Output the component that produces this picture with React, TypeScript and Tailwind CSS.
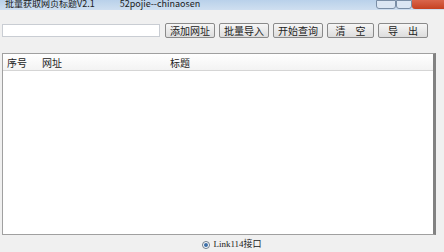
export default function App() {
  const buttons = ['添加网址', '批量导入', '开始查询', '清　空', '导　出']

  return (
    <div
      className="w-[444px] h-[252px] overflow-hidden bg-[#f0f0f0] relative text-[11px] text-[#222]"
      style={{ fontFamily: '"Noto Sans CJK SC", "Liberation Sans", sans-serif' }}
    >
      {/* title bar */}
      <div className="h-[10px] bg-gradient-to-b from-[#b9d1ea] to-[#cfdff0] flex items-end relative">
        <div className="mb-[1px] pl-[5px] flex gap-[25px] text-[9px] leading-[10px] text-[#1a1a1a]">
          <span>批量获取网页标题V2.1</span>
          <span>52pojie--chinaosen</span>
        </div>
        <div className="absolute right-0 top-0 flex h-[9px]">
          <div className="w-[20px] border border-[#7a8ea6] rounded-b-[3px] bg-[#dbe6f3]" />
          <div className="w-[16px] border border-[#7a8ea6] rounded-b-[3px] bg-[#dbe6f3]" />
          <div className="w-[32px] rounded-bl-[3px] bg-gradient-to-b from-[#d9654c] to-[#c6401f]" />
        </div>
      </div>

      {/* toolbar */}
      <div className="flex items-center pl-[2px] mt-[13px] h-[15px]">
        <div className="w-[158px] h-[13px] bg-white border border-[#c9cdd3]" />
        <div className="flex gap-[4px] ml-[5px]">
          {buttons.map((b, i) => (
            <div
              key={b}
              className={`h-[15px] ${i === 3 ? 'w-[47px]' : 'w-[50px]'} border border-[#8a8a8a] rounded-[2px] bg-gradient-to-b from-[#f6f6f6] to-[#dddddd] flex items-center justify-center text-[10px] leading-none text-[#222]`}
            >
              {b}
            </div>
          ))}
        </div>
      </div>

      {/* list */}
      <div className="ml-[2px] mt-[15px] w-[434px] h-[182px] bg-white border border-[#a0a0a0] border-r-[3px] border-r-[#828282]">
        <div className="h-[17px] flex items-center border-b border-[#d5d5d5] bg-gradient-to-b from-white to-[#f3f3f3] text-[10px]">
          <span className="w-[39px] pl-[4px]">序号</span>
          <span className="w-[128px]">网址</span>
          <span>标题</span>
        </div>
      </div>

      {/* status */}
      <div className="flex items-center justify-center h-[16px] mt-[2px] pl-[20px]">
        <div className="flex items-center gap-[3px]">
          <div className="w-[8px] h-[8px] rounded-full border border-[#6d7b8a] bg-white flex items-center justify-center">
            <div className="w-[4px] h-[4px] rounded-full bg-[#3d6fa8]" />
          </div>
          <span className="text-[9px]" style={{ fontFamily: '"Liberation Serif", "Noto Sans CJK SC", serif' }}>
            Link114接口
          </span>
        </div>
      </div>
    </div>
  )
}
